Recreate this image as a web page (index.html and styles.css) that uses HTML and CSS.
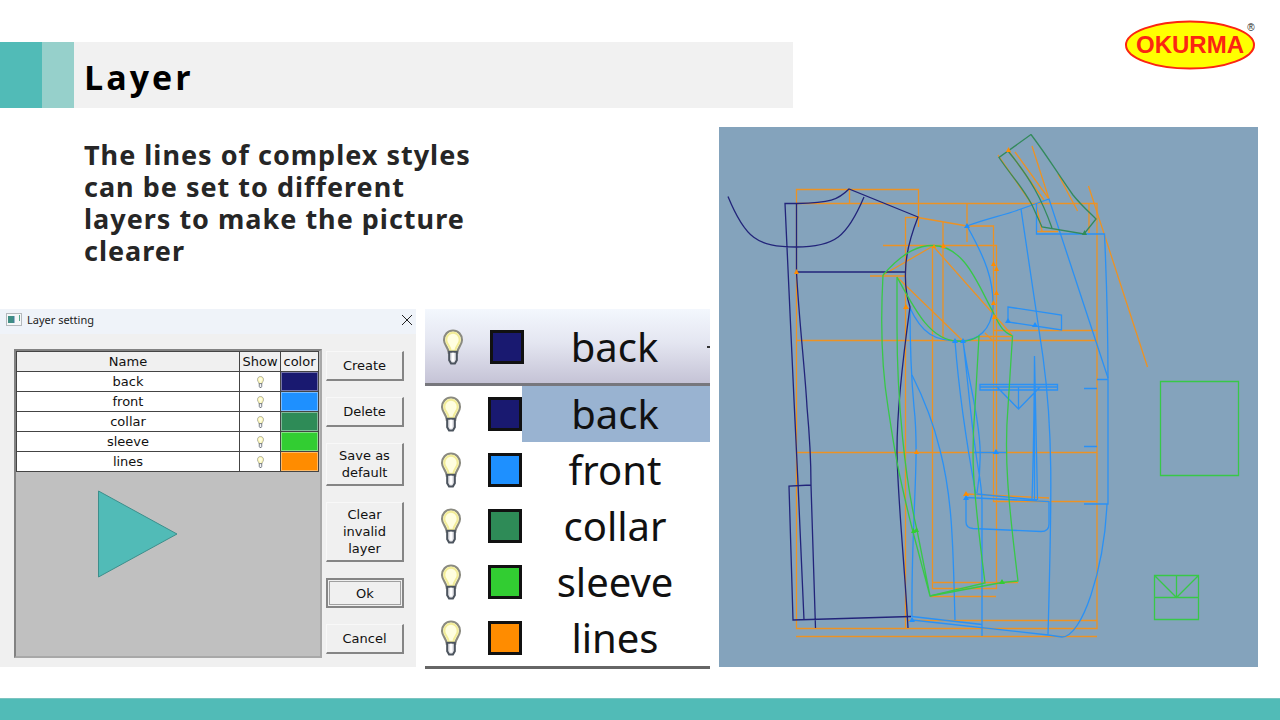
FILE: index.html
```html
<!DOCTYPE html>
<html lang="en">
<head>
<meta charset="utf-8">
<title>Layer</title>
<link rel="stylesheet" href="styles.css">
</head>
<body>
<svg class="defs" aria-hidden="true">
  <symbol id="bulb" viewBox="0 0 22 38">
    <path d="M11 1.500C5.500 1.500 1.500 6 1.500 11.500C1.500 17 6.500 20 6.500 25H15.500C15.500 20 20.500 17 20.500 11.500C20.500 6 16.500 1.500 11 1.500Z" fill="#fffdc8" stroke="#8a8a80" stroke-width="2.200"/>
    <path d="M11 4C7 4 4 7.500 4 11.500C4 16 8.500 18 8.500 23H13.500C13.500 18 18 16 18 11.500C18 7.500 15 4 11 4Z" fill="#fffff0" fill-opacity=".6" stroke="#f2ec98" stroke-width="2"/>
    <path d="M7 24V33L9 36.500H13L15 33V24Z" fill="#e8e8ec" stroke="#4c545e" stroke-width="2.200"/>
    <path d="M11 25V34" stroke="#fff" stroke-width="2"/>
  </symbol>
</svg>
<header class="top">
  <div class="banner">
    <span class="block block-main"></span>
    <span class="block block-light"></span>
    <h1 class="title">Layer</h1>
  </div>
  <svg class="logo" viewBox="0 0 134 52" role="img" aria-label="OKURMA">
    <ellipse cx="66" cy="26" rx="64" ry="23.500" fill="#ff0" stroke="#fb2512" stroke-width="2"/>
    <text x="66" y="34" class="logo-text">OKURMA</text>
    <text x="127" y="12" class="logo-mark">®</text>
  </svg>
</header>
<main class="content">
  <p class="intro">The lines of complex styles can be set to different layers to make the picture clearer</p>

  <section class="dialog">
    <div class="dialog-bar">
      <svg class="app-icon" viewBox="0 0 16 14" aria-hidden="true">
        <rect x=".500" y=".500" width="15" height="12" fill="#f5f7f8" stroke="#b4b9bd"/>
        <rect x="2" y="3" width="6" height="7" fill="#3f8e84"/><path d="M8 3V10" stroke="#477ba0"/>
        <path d="M13.500 2V8" stroke="#59a58c"/>
      </svg>
      <h2 class="dialog-title">Layer setting</h2>
      <button class="close" aria-label="Close"><svg viewBox="0 0 12 12"><path d="M1 1L11 11M11 1L1 11"/></svg></button>
    </div>
    <div class="dialog-body">
      <div class="list">
        <table class="layers">
          <thead><tr><th class="c-name">Name</th><th class="c-show">Show</th><th class="c-color">color</th></tr></thead>
          <tbody>
            <tr><td>back</td><td><svg class="bulb-s"><use href="#bulb"/></svg></td><td class="fill navy"></td></tr>
            <tr><td>front</td><td><svg class="bulb-s"><use href="#bulb"/></svg></td><td class="fill blue"></td></tr>
            <tr><td>collar</td><td><svg class="bulb-s"><use href="#bulb"/></svg></td><td class="fill green"></td></tr>
            <tr><td>sleeve</td><td><svg class="bulb-s"><use href="#bulb"/></svg></td><td class="fill lime"></td></tr>
            <tr><td>lines</td><td><svg class="bulb-s"><use href="#bulb"/></svg></td><td class="fill orange"></td></tr>
          </tbody>
        </table>
        <svg class="play" viewBox="0 0 80 88" aria-hidden="true"><path d="M.500 1L79 44L.500 87Z" fill="#51bbb7" stroke="#3d8e8b"/></svg>
      </div>
      <div class="actions">
        <button class="btn">Create</button>
        <button class="btn">Delete</button>
        <button class="btn">Save as default</button>
        <button class="btn">Clear invalid layer</button>
        <button class="btn btn-ok">Ok</button>
        <button class="btn">Cancel</button>
      </div>
    </div>
  </section>

  <section class="picker">
    <button class="current"><svg class="bulb"><use href="#bulb"/></svg><span class="swatch navy"></span><span class="label">back</span><span class="dash"></span></button>
    <ul class="options">
      <li class="option selected"><svg class="bulb"><use href="#bulb"/></svg><span class="swatch navy"></span><span class="label">back</span></li>
      <li class="option"><svg class="bulb"><use href="#bulb"/></svg><span class="swatch blue"></span><span class="label">front</span></li>
      <li class="option"><svg class="bulb"><use href="#bulb"/></svg><span class="swatch green"></span><span class="label">collar</span></li>
      <li class="option"><svg class="bulb"><use href="#bulb"/></svg><span class="swatch lime"></span><span class="label">sleeve</span></li>
      <li class="option"><svg class="bulb"><use href="#bulb"/></svg><span class="swatch orange"></span><span class="label">lines</span></li>
    </ul>
  </section>

  <svg class="pattern" viewBox="719 127 539 540" role="img" aria-label="Jacket pattern">
    <g class="ln ln-orange">
      <path d="M918.500 227V189.500H796.500V628.500H1097V203.500H796.500M849.500 189V203M796 340.500H1097M796 452.500H1097M796 636.500H1097M908 620.500H1097"/>
      <path d="M905.500 628V217.500H918L967 226H993.500V501.500H1097M883 245.500H996.500V588.500H932.500V246M943 222V340M967 203V242M870 276H905M993 330.500H1097M979 336.500H1012"/>
      <path d="M883 275L933 246L1012 335M897 277L963 341M985 333L993 341M966 494L1049 498M932 582.500H1018M930 596.500H996"/>
      <path d="M1015 152L1049 199L1032 146M1088.500 186L1147.500 367M1089 203V233M1058 174L1077.500 211M998 155L1033 206M1008 150L1044 200M1036 204L1042 231M1036 231.500H1058"/>
    </g>
    <g class="ln ln-blue">
      <path d="M1036.500 204V234H1104.500C1107 290 1108 330 1108 380V504H1084M1097 379.500H1108M1084 388.500H1097M1084 446.500H1097"/>
      <path d="M967 226C985 258 994 280 993 308C991 330 978 341 960 341C935 341 922 334 910 308C910 350 911 375 914 407C920 460 911 520 912 617M967 226C985 219 1005 215 1021 209L1049 199L1108 378"/>
      <path d="M912 375C923 397 934 425 940 450C953 500 953 550 955 620M955 341C958 380 965 435 976 495M963 341C968 380 971 425 978 467Q982 490 982 503V636M963 341C970 390 978 410 980 447Q981 470 977 493"/>
      <path d="M1021 209L1043 357C1053 430 1052 490 1048 635M912 616.500L982 624.500M912 620L1048 635L1062 637C1082 637 1104 570 1107 504"/>
      <path d="M966 498V522Q966 528 973 528.500L1041 531.500Q1049 531.500 1049 524V501.500L966 497.500M977 494L1037 500M974 452.500H1006"/>
      <path d="M980 384.500H1057.500V390H980ZM980 387H1057M997 387L1018.500 409L1040 387M1018.500 387V409M1034.500 356V500M1034.500 356Q1034 440 1032 500M1034.500 356Q1036 440 1037.500 500M1008 307L1061.500 315V330L1008 322Z"/>
    </g>
    <g class="ln ln-green">
      <path d="M1031 134.500L999 157.500C1012 177 1022 186 1032 205L1042 227L1084 234L1096 219C1089 212 1081 205 1073 195C1058 174 1048 157 1031 134.500M1008 151C1031 179 1042 200 1052 228"/>
    </g>
    <g class="ln ln-navy">
      <path d="M728 196.500C745 238 757 247 796 247C835 247 847 237 864 197M804 620L798 483L794 400L785 203.500H797C830 203 838 200 849 189L918 217C909 240 905.500 255 905.500 272C905 286 907 298 910 307C904 350 897 410 897 450C897 490 905 570 908 628"/>
      <path d="M796.500 203V272C799 320 805 370 807 407C810 440 811 470 811 485L815.500 628M797 272H905M811 485L789 486L793 620L911 616.500"/>
    </g>
    <g class="ln ln-lime">
      <path d="M883 275C905 250 920 245.500 933 245.500C965 246 978 285 993 312C1001 329 1004 332 1012.500 336L1008 407C1004 455 1008 500 1018 581L1002 582.500L930 596"/>
      <path d="M883 275C880 330 882 370 888 407C893 440 896 465 913 532L930 596M897 277V327C897 400 905 480 917 530L930 596L985 583C972 480 971 455 975 407L979 336C971 341 964 342 957 341C930 340 915 310 897 277"/>
      <path d="M1160.500 381.500H1238.500V475.500H1160.500ZM1154.500 575.500H1198.500V619.500H1154.500ZM1154.500 597.500H1198.500M1154.500 575.500L1176.500 597.500L1198.500 575.500M1176.500 575.500V597.500"/>
    </g>
    <path class="dot-orange" d="M794 274h5l-2.500-5zM903 309h6l-3-5zM941 248h5l-2.500-5zM991 266h5l-2.500-5zM994 271h5l-2.500-5zM994 295h5l-2.500-5zM991 305h5l-2.500-5zM992 319h5l-2.500-5zM963 496h6l-3-5zM914 454h5l-2.500-5zM1006 152h5l-2.500-5zM932 248h4l-2-4z"/>
    <path class="dot-blue" d="M1005 323h6l-3-5zM1032 327h6l-3-5zM952 343h6l-3-5zM960 343h6l-3-5zM964 228h6l-3-5zM993 454h6l-3-5zM963 500h6l-3-5zM909 622h6l-3-5z"/>
    <path class="dot-lime" d="M911 533h5l-2.500-5zM914 532h5l-2.500-5zM999 584h6l-3-5z"/>
    <path class="dot-green" d="M1082 235h5l-2.500-5z"/>
  </svg>
</main>
<footer class="foot"></footer>
</body>
</html>
```
FILE: styles.css
```css
* { box-sizing: border-box; }
body {
  margin: 0;
  min-height: 100vh;
  display: flex;
  flex-direction: column;
  background: #fff;
  font-family: "Noto Sans", sans-serif;
}
h1, h2, p, ul { margin: 0; padding: 0; }
button { font: inherit; color: inherit; border: 0; background: none; padding: 0; }
.defs { display: none; }

.navy { background: #191970; }
.blue { background: #1e90ff; }
.green { background: #2e8b57; }
.lime { background: #32cd32; }
.orange { background: #ff8c00; }

.top { display: flex; justify-content: space-between; padding: 19px 22px 0 0; }
.banner {
  display: flex;
  width: 63%;
  height: 66px;
  margin-top: 23px;
  background: #f1f1f1;
}
.block-main { width: 42px; background: #51bbb7; }
.block-light { width: 32px; background: #96d0cb; }
.title {
  padding-left: 10px;
  font-family: "Open Sans", "Noto Sans", sans-serif;
  font-size: 34px;
  line-height: 70px;
  letter-spacing: 3px;
  color: #000;
}
.logo { width: 134px; height: 52px; }
.logo-text { font: bold 24px "Liberation Sans", sans-serif; fill: #fb2512; text-anchor: middle; }
.logo-mark { font: 10px "Liberation Sans", sans-serif; fill: #222; text-anchor: middle; }

.content {
  display: grid;
  grid-template-columns: 416fr 285fr 539fr;
  grid-template-rows: auto 1fr;
  column-gap: 9px;
  padding: 19px 22px 29px 0;
}
.intro {
  grid-column: 1 / 3;
  width: 500px;
  min-height: 182px;
  padding: 12px 0 0 84px;
  font-size: 27px;
  font-weight: bold;
  line-height: 32px;
  letter-spacing: 1px;
  color: #262626;
}
.pattern {
  grid-column: 3;
  grid-row: 1 / 3;
  width: 100%;
  background: #84a3bc;
}

.dialog { display: flex; flex-direction: column; height: 358px; background: #f0f0f0; }
.dialog-bar {
  display: flex;
  align-items: center;
  height: 25px;
  padding: 0 3px 4px 6px;
  background: #eff3f9;
}
.app-icon { width: 16px; height: 14px; }
.dialog-title { flex: 1; padding-left: 5px; font-size: 11px; font-weight: normal; color: #222; }
.close { width: 12px; height: 12px; display: flex; }
.close path { stroke: #222; fill: none; }
.dialog-body {
  flex: 1;
  display: flex;
  gap: 4px;
  padding: 15px 12px 9px 14px;
  font-family: "DejaVu Sans", sans-serif;
  font-size: 13px;
  line-height: 17px;
  color: #111;
}
.list {
  flex: 1;
  background: #c0c0c0;
  border: 2px solid #828282;
  border-right-color: #a8a8a8;
  border-bottom-color: #a8a8a8;
  padding-right: 1px;
}
.layers { width: 100%; border-collapse: collapse; table-layout: fixed; background: #fff; }
.layers th, .layers td {
  height: 20px;
  padding: 0;
  border: 1px solid #444;
  font-weight: normal;
  text-align: center;
  white-space: nowrap;
}
.layers th { background: #f0f0f0; }
.c-show { width: 41px; }
.c-color { width: 38px; }
.layers .fill { border-color: #444; box-shadow: inset 0 0 0 1px #ffffff66; }
.layers .navy { background: #191970; }
.layers .blue { background: #1e90ff; }
.layers .green { background: #2e8b57; }
.layers .lime { background: #32cd32; }
.layers .orange { background: #ff8c00; }
.bulb-s { display: block; width: 7px; height: 12px; margin: 0 auto; }
.play { display: block; width: 80px; height: 88px; margin: 18px 0 0 82px; }

.actions { display: flex; flex-direction: column; gap: 16px; width: 78px; padding-top: 2px; }
.btn {
  min-height: 30px;
  padding: 3px 8px;
  border: 1px solid #f8f8f8;
  border-right: 2px solid #858585;
  border-bottom: 2px solid #858585;
}
.btn-ok { border: 2px solid #858585; outline: 1px solid #a0a0a0; outline-offset: -4px; }

.picker { height: 360px; display: flex; flex-direction: column; overflow: hidden; border-bottom: 3px solid #666; font-size: 40px; line-height: 56px; color: #111; }
.current {
  display: flex;
  align-items: center;
  height: 78px;
  padding: 2px 0 0 17px;
  border-bottom: 3px solid #77777d;
  background: linear-gradient(#f3f7fd, #e4e6f1 45%, #c5c3d6);
}
.bulb { flex: none; width: 22px; height: 36px; }
.swatch { flex: none; width: 34px; height: 34px; margin-left: 26px; border: 3px solid #111; }
.label { flex: 1; text-align: center; padding-right: 2px; }
.dash { width: 3px; height: 2px; background: #333; }
.options { list-style: none; }
.option { display: flex; align-items: center; height: 56px; padding-left: 15px; }
.selected .label { background: #99b3d1; }

.ln { fill: none; stroke-width: 1.300; }
.ln-orange { stroke: #ec9224; }
.ln-blue { stroke: #2a91f5; }
.ln-green { stroke: #338a5c; }
.ln-navy { stroke: #22247a; }
.ln-lime { stroke: #38c848; }
.dot-orange { fill: #ff8c00; }
.dot-blue { fill: #1e90ff; }
.dot-lime { fill: #32cd32; }
.dot-green { fill: #2e8b57; }

.foot { height: 22px; margin-top: auto; background: #51bbb7; border-top: 1px solid #7cc4c0; }
```
